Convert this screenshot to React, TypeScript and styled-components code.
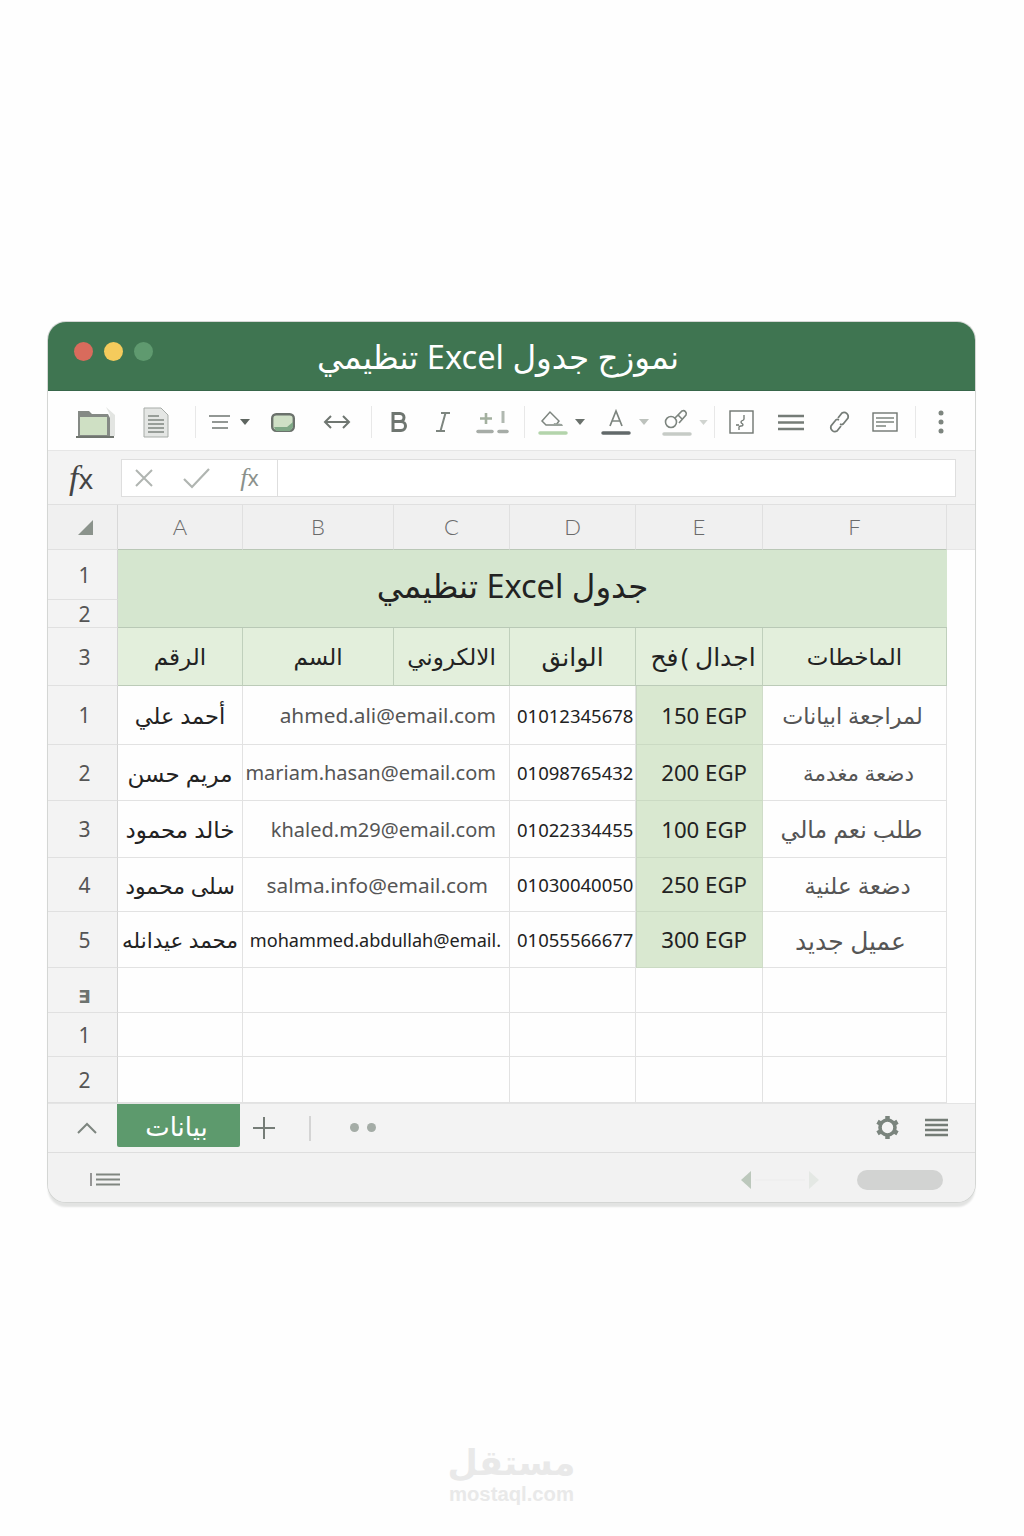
import React from 'react';
import styled, { createGlobalStyle } from 'styled-components';

const GlobalStyle = createGlobalStyle`
	html, body {
		margin: 0;
		padding: 0;
		background: #fefefe;
	}
	* {
		box-sizing: border-box;
	}
`;

const fontStack = `"Noto Sans", "DejaVu Sans", sans-serif`;

const Page = styled.div`
	width: 1024px;
	height: 1536px;
	padding: 322px 49px 0 48px;
	font-family: ${fontStack};
	background: #fefefe;
`;

const Win = styled.div`
	width: 927px;
	height: 880px;
	border-radius: 18px;
	overflow: hidden;
	background: #f2f2f2;
	box-shadow: 0 0 0 1px #d4d6d4;
	display: flex;
	flex-direction: column;
`;

const Shadow = styled.div`
	width: 927px;
	height: 880px;
	border-radius: 18px;
	box-shadow: 0 5px 2px #e2e3e2;
`;

const TitleBar = styled.div`
	height: 69px;
	flex: none;
	background: #3f7551;
	border-bottom: 1px solid #37664a;
	display: flex;
	align-items: flex-start;
	padding: 20px 0 0 26px;
`;

const Light = styled.span<{ $color: string }>`
	width: 19px;
	height: 19px;
	border-radius: 50%;
	margin-right: 11px;
	flex: none;
	background: ${({ $color }) => $color};
`;

const Title = styled.div`
	flex: 1;
	margin-top: -6px;
	padding-right: 143px;
	text-align: center;
	color: #fff;
	font-size: 32.6px;
	line-height: 42px;
	white-space: nowrap;
`;

const Toolbar = styled.div`
	height: 60px;
	flex: none;
	background: #fefefe;
	border-bottom: 1px solid #e6e6e6;
	display: flex;
	align-items: center;
	padding: 3px 0 0 28px;
`;

const Tool = styled.svg<{ $ml: number }>`
	flex: none;
	margin-left: ${({ $ml }) => $ml}px;
	overflow: visible;
`;

const ToolSep = styled.span<{ $ml: number }>`
	flex: none;
	width: 1px;
	height: 32px;
	background: #e8e8e8;
	margin-left: ${({ $ml }) => $ml}px;
`;

const FormulaBar = styled.div`
	height: 54px;
	flex: none;
	background: #f3f3f3;
	border-bottom: 1px solid #e0e0e0;
	display: flex;
	align-items: center;
	padding: 0 19px 0 21px;
`;

const FxLabel = styled.span<{ $size: number; $color: string }>`
	font-family: "Liberation Serif", serif;
	font-style: italic;
	font-size: ${({ $size }) => $size}px;
	color: ${({ $color }) => $color};
	white-space: nowrap;
`;

const FxTail = styled.span`
	font-family: "Noto Sans", sans-serif;
	font-style: normal;
	font-size: 0.82em;
`;

const FormulaBox = styled.div`
	margin-left: 28px;
	flex: 1;
	height: 38px;
	background: #fff;
	border: 1px solid #dedede;
	display: flex;
`;

const FormulaButtons = styled.div`
	width: 156px;
	border-right: 1px solid #dedede;
	display: flex;
	align-items: center;
	padding-left: 13px;
	gap: 30px;
`;

const Sheet = styled.div`
	flex: none;
	display: grid;
	grid-template-columns: 70px 125px 151px 116px 126px 127px 184px 28px;
	grid-template-rows: 45px 50px 28px 58px 59px 56px 57px 54px 56px 45px 44px 46px;
	background: #fefefe;
`;

const ColHead = styled.div`
	background: #f0f0f0;
	border-right: 1px solid #e0e0e0;
	border-bottom: 1px solid #b9c7b6;
	display: flex;
	align-items: center;
	justify-content: center;
	color: #6a6a6a;
	font-family: "Lato", sans-serif;
	font-weight: 300;
	font-size: 22px;
	padding-bottom: 2px;
`;

const Corner = styled(ColHead)`
	border-right: 1px solid #d8d8d8;
	border-bottom: 1px solid #e0e0e0;
	padding: 0 0 0 6px;
`;

const EndHead = styled(ColHead)`
	border-right: none;
	border-bottom: 1px solid #e6e6e6;
`;

const RowHead = styled.div`
	grid-column: 1;
	background: #f3f3f3;
	border-right: 1px solid #d4d4d4;
	border-bottom: 1px solid #e0e0e0;
	display: flex;
	align-items: center;
	justify-content: center;
	color: #555;
	font-size: 21px;
	padding-left: 4px;
`;

const RowGlyph = styled.span`
	font-family: "DejaVu Sans", sans-serif;
	font-weight: 700;
	font-size: 18px;
	color: #6d726e;
	padding-top: 12px;
`;

const Band = styled.div`
	grid-column: 2 / 8;
	grid-row: 2 / 4;
	background: #d5e6cf;
	border-bottom: 1px solid #b9c9b6;
	display: flex;
	align-items: center;
	justify-content: center;
	color: #222;
	font-size: 32.5px;
	padding: 0 40px 6px 0;
`;

const BandEnd = styled.div`
	grid-column: 8;
	grid-row: 2 / 4;
	background: #fefefe;
`;

const HeadCell = styled.div<{ $size?: number; $indent?: number }>`
	background: #e3efdc;
	border-right: 1px solid #c0d0bc;
	border-bottom: 1px solid #bccbb8;
	display: flex;
	align-items: center;
	justify-content: center;
	color: #222;
	font-size: ${({ $size }) => $size || 23}px;
	white-space: nowrap;
	overflow: hidden;
	padding: 0 0 2px ${({ $indent }) => $indent || 0}px;
`;

const Cell = styled.div<{
	$align?: string;
	$pad?: number;
	$indent?: number;
	$size?: number;
	$color?: string;
	$span?: number;
}>`
	grid-column: ${({ $span }) => ($span ? `span ${$span}` : 'auto')};
	background: #fefefe;
	border-right: 1px solid #e2e2e2;
	border-bottom: 1px solid #e2e2e2;
	display: flex;
	align-items: center;
	justify-content: ${({ $align }) => $align || 'center'};
	padding: 0 ${({ $pad }) => $pad || 0}px 0 ${({ $indent }) => $indent || 0}px;
	color: ${({ $color }) => $color || '#333'};
	font-size: ${({ $size }) => $size || 20}px;
	white-space: nowrap;
	overflow: hidden;
`;

const PriceCell = styled(Cell)`
	background: #d9e8d0;
	border-right: 1px solid #cfdcc8;
	border-bottom: 1px solid #cbdac3;
	border-left: 1px solid #c8d6c2;
	color: #222;
	justify-content: flex-end;
	padding-right: 15px;
	font-size: 22.2px;
`;

const Spare = styled.div`
	background: #fefefe;
`;

const TabBar = styled.div`
	height: 50px;
	flex: none;
	background: #f3f3f3;
	border-top: 1px solid #e4e4e4;
	border-bottom: 1px solid #dedede;
	display: flex;
	align-items: flex-start;
	padding: 0 27px 0 29px;
`;

const TabIcon = styled.svg<{ $ml?: number; $mt?: number; $auto?: boolean }>`
	flex: none;
	margin-left: ${({ $ml, $auto }) => ($auto ? 'auto' : `${$ml || 0}px`)};
	margin-top: ${({ $mt }) => $mt || 0}px;
`;

const SheetTab = styled.div`
	flex: none;
	width: 123px;
	height: 43px;
	margin-left: 20px;
	background: #5d9a6d;
	color: #fff;
	font-size: 26px;
	display: flex;
	align-items: center;
	justify-content: center;
	padding-right: 4px;
	border-radius: 0 0 2px 2px;
`;

const TabDivider = styled.span`
	flex: none;
	width: 2px;
	height: 25px;
	margin: 12px 0 0 34px;
	background: #d4d4d4;
`;

const Dots = styled.span`
	flex: none;
	margin: 19px 0 0 39px;
	display: flex;
	gap: 8px;
`;

const Dot = styled.span`
	width: 9px;
	height: 9px;
	border-radius: 50%;
	background: #a4aca6;
`;

const Footer = styled.div`
	flex: 1;
	background: #f2f2f2;
	display: flex;
	align-items: center;
	padding: 7px 32px 3px 42px;
`;

const Pill = styled.span`
	flex: none;
	width: 86px;
	height: 20px;
	border-radius: 10px;
	background: #d2d3d2;
	margin-left: 38px;
`;

const Watermark = styled.div`
	margin-top: 240px;
	display: flex;
	flex-direction: column;
	align-items: center;
	color: #e9e9e9;
`;

const MarkArabic = styled.div`
	font-family: "DejaVu Sans", sans-serif;
	font-weight: 700;
	font-size: 35px;
	line-height: 42px;
`;

const MarkLatin = styled.div`
	font-family: "Liberation Sans", sans-serif;
	font-weight: 700;
	font-size: 20.3px;
	line-height: 20px;
`;

const grey = '#7d857f';

const rows = [
	{ n: '1', name: 'أحمد علي', nameSize: 22.5, email: 'ahmed.ali@email.com', emailSize: 20.8, emailPad: 13, phone: '01012345678', price: '150 EGP', note: 'لمراجعة ابيانات', noteSize: 22.3, noteIndent: 0, notePad: 4 },
	{ n: '2', name: 'مريم حسن', nameSize: 23, email: 'mariam.hasan@email.com', emailSize: 20, emailPad: 13, phone: '01098765432', price: '200 EGP', note: 'دضعة مغدمة', noteSize: 21.4, noteIndent: 8, notePad: 0 },
	{ n: '3', name: 'خالد محمود', nameSize: 23, email: 'khaled.m29@email.com', emailSize: 20, emailPad: 13, phone: '01022334455', price: '100 EGP', note: 'طلب نعم مالي', noteSize: 23.5, noteIndent: 0, notePad: 6 },
	{ n: '4', name: 'سلى محمود', nameSize: 22, email: 'salma.info@email.com', emailSize: 20.8, emailPad: 21, phone: '01030040050', price: '250 EGP', note: 'دضعة علنية', noteSize: 23, noteIndent: 6, notePad: 0 },
	{ n: '5', name: 'محمد عيدانله', nameSize: 21.5, email: 'mohammed.abdullah@email.', emailSize: 18.1, emailPad: 8, phone: '01055566677', price: '300 EGP', note: 'عميل جديد', noteSize: 25, noteIndent: 0, notePad: 8 },
];

const App = () => {
	return (
		<Page>
			<GlobalStyle />
			<Shadow>
				<Win>
					<TitleBar>
						<Light $color="#d96b5c" />
						<Light $color="#f5cb5c" />
						<Light $color="#5f9a6f" />
						<Title dir="rtl">نموزج جدول Excel تنظيمي</Title>
					</TitleBar>

					<Toolbar>
						{/* folder */}
						<Tool $ml={0} width="40" height="32" viewBox="0 0 40 32">
							<path d="M2 30V5h11l3 3h16l2 4v18z" fill="#858a85" />
							<path d="M30 1l9 8v21h-5V9z" fill="#e3e5e2" />
							<rect x="4" y="11" width="27" height="18" fill="#cfe0c4" />
							<path d="M0 31h38" stroke="#70756f" strokeWidth="2" />
						</Tool>
						{/* page */}
						<Tool $ml={27} width="26" height="31" viewBox="0 0 26 31">
							<path d="M1 1h17l7 7v22H1z" fill="#e4e6e4" stroke="#a7aca8" />
							<path d="M5 9h11M5 13h16M5 17h16M5 21h16M5 25h16" stroke="#7f8680" strokeWidth="1.6" />
						</Tool>
						<ToolSep $ml={26} />
						{/* align + caret */}
						<Tool $ml={13} width="22" height="14" viewBox="0 0 22 14">
							<path d="M0 1h21M3 7h16M3 13h16" stroke="#6f7671" strokeWidth="1.5" />
						</Tool>
						<Tool $ml={9} width="10" height="6" viewBox="0 0 10 6">
							<path d="M0 0h10L5 6z" fill="#5e6560" />
						</Tool>
						{/* cell */}
						<Tool $ml={21} width="24" height="19" viewBox="0 0 24 19">
							<rect x="1.2" y="1.2" width="21.6" height="16.6" rx="4" fill="#cfe0c6" stroke="#6b726c" strokeWidth="2.4" />
							<path d="M3 14h13l6-5v5l-3 4H5z" fill="#7fa886" />
						</Tool>
						{/* arrows */}
						<Tool $ml={29} width="26" height="16" viewBox="0 0 26 16">
							<path d="M1 8h24M7 2L1 8l6 6M19 2l6 6-6 6" fill="none" stroke="#6f7671" strokeWidth="2" />
						</Tool>
						<ToolSep $ml={21} />
						{/* bold */}
						<Tool $ml={19} width="17" height="20" viewBox="0 0 17 20">
							<path d="M2 1.5h7a4 4 0 010 8H2zM2 9.5h8a4.5 4.5 0 010 9H2z" fill="none" stroke="#6e7570" strokeWidth="3" />
						</Tool>
						{/* italic */}
						<Tool $ml={28} width="14" height="20" viewBox="0 0 14 20">
							<path d="M5 1h9M0 19h9M9.5 1L4.5 19" fill="none" stroke="#7d857f" strokeWidth="2" />
						</Tool>
						{/* plus minus, exclamation */}
						<Tool $ml={27} width="31" height="24" viewBox="0 0 31 24">
							<path d="M9 3v11M3 8.500h12" stroke="#a3b09f" strokeWidth="2.6" />
							<path d="M1 21.500h14" stroke="#a6aca7" strokeWidth="3.500" strokeLinecap="round" />
							<path d="M26 1v12" stroke="#b0b8b0" strokeWidth="3" />
							<path d="M22 21.500h8" stroke="#a6aca7" strokeWidth="3.500" strokeLinecap="round" />
						</Tool>
						<ToolSep $ml={16} />
						{/* fill */}
						<Tool $ml={14} width="28" height="26" viewBox="0 0 28 26">
							<path d="M3 12l8-9 9 9-3 4H7z" fill="none" stroke="#7d857f" strokeWidth="1.500" />
							<path d="M15 14l8 1 1 2H14z" fill="#9aa39c" />
							<path d="M1 24h26" stroke="#b3d4ab" strokeWidth="3.500" strokeLinecap="round" />
						</Tool>
						<Tool $ml={8} width="10" height="6" viewBox="0 0 10 6">
							<path d="M0 0h10L5 6z" fill="#6a716c" />
						</Tool>
						{/* font colour */}
						<Tool $ml={17} width="28" height="26" viewBox="0 0 28 26">
							<path d="M8 17l6-15 6 15M10 12h8" fill="none" stroke="#7d857f" strokeWidth="1.700" />
							<path d="M1 24h26" stroke="#62696a" strokeWidth="3.500" strokeLinecap="round" />
						</Tool>
						<Tool $ml={9} width="10" height="6" viewBox="0 0 10 6">
							<path d="M0 0h10L5 6z" fill="#bdc2bd" />
						</Tool>
						{/* eraser */}
						<Tool $ml={14} width="28" height="28" viewBox="0 0 28 28">
							<circle cx="8" cy="14" r="5.500" fill="none" stroke="#7d857f" strokeWidth="1.600" />
							<path d="M12 10l7-7a3 3 0 014 4l-7 8" fill="none" stroke="#7d857f" strokeWidth="1.600" />
							<path d="M15 7l4 4" stroke="#7d857f" strokeWidth="1.600" />
							<path d="M1 26h26" stroke="#c6cbc6" strokeWidth="3.500" strokeLinecap="round" />
						</Tool>
						<Tool $ml={8} width="9" height="5" viewBox="0 0 10 6">
							<path d="M0 0h10L5 6z" fill="#d0d4d0" />
						</Tool>
						<ToolSep $ml={6} />
						{/* connector box */}
						<Tool $ml={14} width="25" height="24" viewBox="0 0 25 24">
							<rect x="1" y="1" width="23" height="22" fill="#fff" stroke="#6f7671" strokeWidth="1.400" />
							<path d="M15 5v4c0 2-3 1-3 3s2 1 2 3-4 0-4 2 0 2 0 3M7 15h3" fill="none" stroke="#6f7671" strokeWidth="1.300" />
						</Tool>
						{/* lines */}
						<Tool $ml={24} width="26" height="17" viewBox="0 0 26 17">
							<path d="M0 2h26M0 8.500h26M0 15h26" stroke="#757c77" strokeWidth="2.400" />
						</Tool>
						{/* link */}
						<Tool $ml={24} width="23" height="24" viewBox="0 0 23 24">
							<path d="M10 8l4-5a4.200 4.200 0 016 5l-4 5a3 3 0 01-4 1M13 16l-4 5a4.200 4.200 0 01-6-5l4-5a3 3 0 014-1" fill="none" stroke="#757c77" strokeWidth="1.700" />
						</Tool>
						{/* comment */}
						<Tool $ml={21} width="26" height="20" viewBox="0 0 26 20">
							<rect x="1" y="1" width="24" height="18" fill="none" stroke="#6f7671" strokeWidth="1.400" />
							<path d="M4 6h18M4 10h18M4 14h10" stroke="#7d857f" strokeWidth="1.300" />
						</Tool>
						<ToolSep $ml={17} />
						{/* more */}
						<Tool $ml={22} width="6" height="26" viewBox="0 0 6 26">
							<circle cx="3" cy="4" r="2.500" fill="#7d857f" />
							<circle cx="3" cy="13" r="2.500" fill="#7d857f" />
							<circle cx="3" cy="22" r="2.500" fill="#7d857f" />
						</Tool>
					</Toolbar>

					<FormulaBar>
						<FxLabel $size={34} $color="#444">
							f<FxTail>x</FxTail>
						</FxLabel>
						<FormulaBox>
							<FormulaButtons>
								<svg width="18" height="18" viewBox="0 0 18 18">
									<path d="M1 1l16 16M17 1L1 17" stroke="#b0b5b1" strokeWidth="2" />
								</svg>
								<svg width="27" height="22" viewBox="0 0 27 22">
									<path d="M1 12l8 8L26 2" fill="none" stroke="#b0b5b1" strokeWidth="2.200" />
								</svg>
								<FxLabel $size={26} $color="#8b918c">
									f<FxTail>x</FxTail>
								</FxLabel>
							</FormulaButtons>
						</FormulaBox>
					</FormulaBar>

					<Sheet>
						<Corner>
							<svg width="15" height="15" viewBox="0 0 15 15">
								<path d="M0 15L15 0v15z" fill="#8b938c" />
							</svg>
						</Corner>
						{['A', 'B', 'C', 'D', 'E', 'F'].map((col) => (
							<ColHead key={col}>{col}</ColHead>
						))}
						<EndHead />

						<RowHead>1</RowHead>
						<Band dir="rtl">جدول Excel تنظيمي</Band>
						<BandEnd />
						<RowHead>2</RowHead>

						<RowHead>3</RowHead>
						<HeadCell>الرقم</HeadCell>
						<HeadCell>السم</HeadCell>
						<HeadCell>الالكروني</HeadCell>
						<HeadCell $size={25}>الوانق</HeadCell>
						<HeadCell dir="rtl" $size={25} $indent={8}>اجدال )&#8202;فح</HeadCell>
						<HeadCell>الماخطات</HeadCell>
						<Spare />

						{rows.map((r) => (
							<React.Fragment key={r.n}>
								<RowHead>{r.n}</RowHead>
								<Cell $size={r.nameSize} $color="#222">{r.name}</Cell>
								<Cell
									$span={2}
									$align="flex-end"
									$pad={r.emailPad}
									$size={r.emailSize}
									$color={r.n === '5' ? '#222' : '#555'}
								>
									{r.email}
								</Cell>
								<Cell $align="flex-start" $indent={7} $size={18.5} $color="#222">{r.phone}</Cell>
								<PriceCell>{r.price}</PriceCell>
								<Cell $size={r.noteSize} $color="#555" $indent={r.noteIndent} $pad={r.notePad}>{r.note}</Cell>
								<Spare />
							</React.Fragment>
						))}

						{['∃', '1', '2'].map((label) => (
							<React.Fragment key={label}>
								<RowHead>{label === '∃' ? <RowGlyph>{label}</RowGlyph> : label}</RowHead>
								<Cell />
								<Cell $span={2} />
								<Cell />
								<Cell />
								<Cell />
								<Spare />
							</React.Fragment>
						))}
					</Sheet>

					<TabBar>
						<TabIcon $mt={18} width="20" height="12" viewBox="0 0 20 12">
							<path d="M1 11l9-9 9 9" fill="none" stroke={grey} strokeWidth="2" />
						</TabIcon>
						<SheetTab>بيانات</SheetTab>
						<TabIcon $ml={13} $mt={13} width="22" height="22" viewBox="0 0 22 22">
							<path d="M11 0v22M0 11h22" stroke="#757c77" strokeWidth="2" />
						</TabIcon>
						<TabDivider />
						<Dots>
							<Dot />
							<Dot />
						</Dots>
						<TabIcon $auto $mt={11} width="25" height="25" viewBox="0 0 25 25">
							<circle cx="12.500" cy="12.500" r="7.500" fill="none" stroke="#7a847d" strokeWidth="3.600" />
							<path d="M12.500 1v3M12.500 21v3M2.500 6.800l2.600 1.500M19.900 16.700l2.600 1.500M2.500 18.200l2.600-1.500M19.900 8.300l2.600-1.500" stroke="#7a847d" strokeWidth="4.500" />
						</TabIcon>
						<TabIcon $ml={25} $mt={14} width="23" height="19" viewBox="0 0 23 19">
							<path d="M0 2h23M0 7h23M0 12h23M0 17h23" stroke="#747c76" strokeWidth="2.500" />
						</TabIcon>
					</TabBar>

					<Footer>
						<svg width="30" height="13" viewBox="0 0 30 13">
							<path d="M1 0v13" stroke="#777" strokeWidth="1.500" />
							<path d="M6 1.500h24M6 6.500h24M6 11.500h24" stroke="#808680" strokeWidth="2" />
						</svg>
						<TabIcon $auto width="78" height="18" viewBox="0 0 78 18">
							<path d="M10 0v18L0 9z" fill="#bcc8bc" />
							<path d="M14 9h50" stroke="#ececec" strokeWidth="1" />
							<path d="M68 0v18l10-9z" fill="#e4e8e4" />
						</TabIcon>
						<Pill />
					</Footer>
				</Win>
			</Shadow>

			<Watermark>
				<MarkArabic>مستقل</MarkArabic>
				<MarkLatin>mostaql.com</MarkLatin>
			</Watermark>
		</Page>
	);
};

export default App;
